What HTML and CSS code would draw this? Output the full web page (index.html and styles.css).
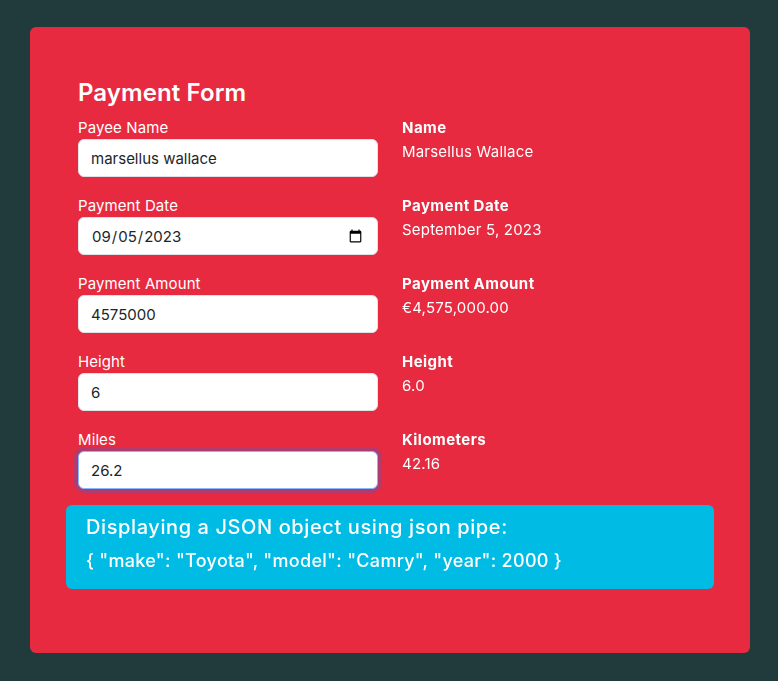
FILE: index.html
```html
<!DOCTYPE html>
<html lang="en">
<head>
<meta charset="utf-8">
<title>Payment Form</title>
<link rel="stylesheet" href="styles.css">
</head>
<body>
<main class="card">
  <div class="container">
    <div class="row">
      <div class="col">
        <h2 class="title">Payment Form</h2>
        <div class="field">
          <label for="payee">Payee Name</label>
          <input id="payee" class="input" type="text" value="marsellus wallace">
        </div>
        <div class="field">
          <label for="pdate">Payment Date</label>
          <input id="pdate" class="input" type="date" value="2023-09-05">
        </div>
        <div class="field">
          <label for="amount">Payment Amount</label>
          <input id="amount" class="input" type="text" value="4575000">
        </div>
        <div class="field">
          <label for="height">Height</label>
          <input id="height" class="input" type="text" value="6">
        </div>
        <div class="field">
          <label for="miles">Miles</label>
          <input id="miles" class="input focused" type="text" value="26.2" autofocus>
        </div>
      </div>
      <div class="col col-out">
        <div class="out">
          <div class="out-label">Name</div>
          <div class="out-value">Marsellus Wallace</div>
        </div>
        <div class="out">
          <div class="out-label">Payment Date</div>
          <div class="out-value">September 5, 2023</div>
        </div>
        <div class="out">
          <div class="out-label">Payment Amount</div>
          <div class="out-value">€4,575,000.00</div>
        </div>
        <div class="out">
          <div class="out-label">Height</div>
          <div class="out-value">6.0</div>
        </div>
        <div class="out">
          <div class="out-label">Kilometers</div>
          <div class="out-value">42.16</div>
        </div>
      </div>
    </div>
    <div class="json-box">
      <h5 class="json-title">Displaying a JSON object using json pipe:</h5>
      <h6 class="json-text">{ "make": "Toyota", "model": "Camry", "year": 2000 }</h6>
    </div>
  </div>
</main>
</body>
</html>
```
FILE: styles.css
```css
* { box-sizing: border-box; }
html, body { margin: 0; }
body {
  background: #213a3b;
  font-family: Inter, "Noto Sans", sans-serif;
  color: #fff;
  padding: 27px 28px 28px 30px;
  height: 681px;
}
.card {
  background: #e72a3f;
  border-radius: 6px;
  width: 720px;
  height: 626px;
  padding: 51px 36px 0 36px;
}
.row {
  display: flex;
  align-items: flex-start;
}
.col {
  width: 324px;
  padding: 0 12px;
}
.col-out {
  padding-top: 38px;
}
.title {
  margin: 0 0 8px;
  font-size: 24px;
  font-weight: 600;
  line-height: 29px;
  letter-spacing: 0.1px;
}
.field {
  margin-bottom: 16px;
}
.field label {
  display: block;
  padding-top: 1px;
  font-size: 15px;
  line-height: 23px;
  letter-spacing: 0.1px;
}
.input {
  display: block;
  width: 300px;
  height: 38px;
  padding: 6px 12px;
  font-family: Inter, "Noto Sans", sans-serif;
  font-size: 15px;
  color: #212529;
  background: #fff;
  border: 1px solid #dee2e6;
  border-radius: 6px;
  outline: none;
  caret-color: #212529;
}
.focused {
  border-color: #86b7fe;
  box-shadow: 0 0 0 4px rgba(13, 110, 253, 0.25);
}
.out {
  margin-bottom: 30px;
}
.out:last-child {
  margin-bottom: 0;
}
.out-label {
  font-size: 15px;
  font-weight: 700;
  line-height: 24px;
  letter-spacing: 0.45px;
}
.out-value {
  font-size: 15px;
  line-height: 24px;
  letter-spacing: 0.2px;
}
.json-box {
  background: #00bce4;
  border-radius: 6px;
  height: 84px;
  padding: 10px 20px;
}
.json-title {
  margin: 0 0 10px;
  font-size: 20px;
  font-weight: 500;
  line-height: 24px;
  letter-spacing: 0.6px;
}
.json-text {
  margin: 0;
  font-size: 18px;
  font-weight: 500;
  line-height: 24px;
  letter-spacing: 0.3px;
}
```
